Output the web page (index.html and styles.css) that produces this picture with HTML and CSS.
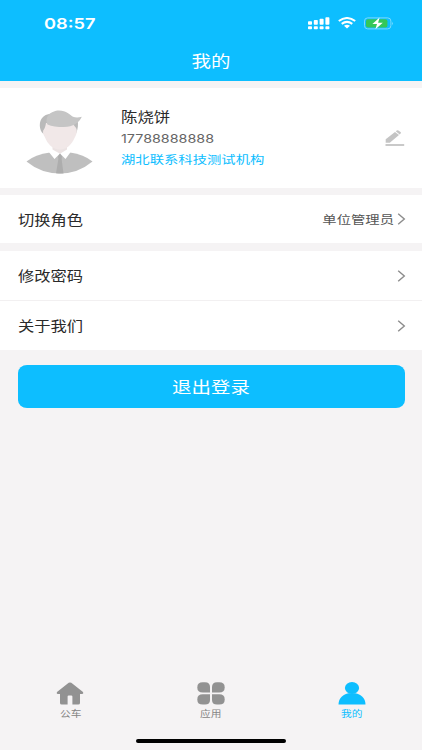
FILE: index.html
```html
<!DOCTYPE html>
<html lang="zh-CN">
  <head>
    <meta charset="UTF-8" />
    <meta name="viewport" content="width=device-width, initial-scale=1.0" />
    <title>我的</title>
    <link rel="stylesheet" href="styles.css">
  </head>
  <body>
    <header class="header">
      <div class="status-bar">
        <span class="time wide">08:57</span>
        <div class="status-icons">
          <svg class="signal" width="22" height="13" viewBox="0 0 22 13" fill="#fff">
            <rect x="0" y="4.2" width="4" height="3.6" rx="0.8" />
            <rect x="5.8" y="3.1" width="4" height="4.7" rx="0.8" />
            <rect x="11.6" y="1.7" width="4" height="6.1" rx="0.8" />
            <rect x="17.4" y="0.3" width="4" height="7.5" rx="0.8" />
            <rect x="0" y="9.2" width="4" height="3" rx="0.8" />
            <rect x="5.8" y="9.2" width="4" height="3" rx="0.8" />
            <rect x="11.6" y="9.2" width="4" height="3" rx="0.8" />
            <rect x="17.4" y="9.2" width="4" height="3" rx="0.8" />
          </svg>
          <svg class="wifi" width="18" height="12" viewBox="0 0 18 12" fill="none" stroke="#fff" stroke-width="2.1">
            <path d="M0.8 4 Q9 -1.9 17.2 4" />
            <path d="M3.7 6.8 Q9 3 14.3 6.8" />
            <path d="M6 8.8 Q9 6.8 12 8.8 L9 11.4Z" fill="#fff" stroke="none" />
          </svg>
          <svg class="battery" width="30" height="13" viewBox="0 0 30 13">
            <rect x="0.5" y="0.9" width="26.4" height="11" rx="3.2" fill="none" stroke="#7cdafc" />
            <rect x="2" y="2.2" width="21.4" height="8.4" rx="2" fill="#34c759" />
            <path d="M28.2 4.7 Q29.7 6.3 28.2 8.2Z" fill="#9ae3fd" />
            <path d="M15.6 0.6 L8.4 7.1 H13 L11.4 12.3 L18.8 5.7 H14.1Z" fill="#fff" />
          </svg>
        </div>
      </div>
      <h1 class="title"><span class="wide">我的</span></h1>
    </header>

    <main class="content">
      <section class="profile">
        <svg class="avatar" width="67" height="64" viewBox="0 0 67 64">
          <path d="M0.5 51.5 Q9 44.5 24 42.5 H44 Q58 44.5 66.5 51.5 Q52 63.5 34 63.5 Q15 63.5 0.5 51.5Z" fill="#bfbfbf" />
          <path d="M23 42.3 L26 40 H41.5 L44.5 42.3 L39.5 49 L34 43.5 L28.5 49Z" fill="#fff" />
          <path d="M26.5 34 H41 V39.5 L34 43.8 L26.5 39.5Z" fill="#ebe3e3" />
          <path d="M17 23.5 C13 20 12.5 11 17 7 C20 4 26 3 30 3 L46 9 L51.5 10 C52.5 14 52 19 50 23.5Z" fill="#bababa" />
          <path d="M20 13 L47 13 C48 17 51 17 50.8 21 C50.5 24 50 25 49 27 C46 34 41 39.5 34 39.5 C27 39.5 21.5 34 18.8 27 C17.6 25 16.5 23 17.2 20.5 C18.8 19 19.5 16 20 13Z" fill="#f1e8e8" />
          <path d="M21.5 14.5 C18 7 25 0.5 33 0.5 C40.5 0.5 44 5 47 6.7 Q50.5 8.3 55.8 6.8 C53.5 12.5 47 17 38 17 C31 17 26 16.5 21.5 14.5Z" fill="#c5c5c5" />
          <path d="M32 46.5 L34 43.6 L36 46.5 L35.6 49 L37.5 63.4 Q34 63.7 30 63.3 L32.4 49Z" fill="#adadad" />
        </svg>
        <div class="profile-info">
          <p class="name"><span class="wide">陈烧饼</span></p>
          <p class="phone"><span class="wide">17788888888</span></p>
          <p class="company"><span class="wide">湖北联系科技测试机构</span></p>
        </div>
        <svg class="edit" width="20" height="18" viewBox="0 0 20 18" fill="#c4c4c4">
          <path d="M0.7 12.8 V9.3 L10 1.9 L14 5 L4.8 12.8Z" />
          <path d="M10.8 1.3 L11.8 0.5 Q12.6 -0.1 13.4 0.5 L15.5 2.1 Q16.3 2.8 15.6 3.5 L14.7 4.4Z" />
          <rect x="0.5" y="14.1" width="18.7" height="1.8" />
        </svg>
      </section>

      <section class="list">
        <div class="list-item role">
          <span class="wide">切换角色</span>
          <span class="value wide">单位管理员</span>
          <svg class="arrow" width="9" height="12" viewBox="0 0 9 12"><path d="M1.2 0.8 L7.3 6 L1.2 11.2" /></svg>
        </div>
      </section>

      <section class="list">
        <div class="list-item">
          <span class="wide">修改密码</span>
          <svg class="arrow" width="9" height="12" viewBox="0 0 9 12"><path d="M1.2 0.8 L7.3 6 L1.2 11.2" /></svg>
        </div>
        <div class="list-item">
          <span class="wide">关于我们</span>
          <svg class="arrow" width="9" height="12" viewBox="0 0 9 12"><path d="M1.2 0.8 L7.3 6 L1.2 11.2" /></svg>
        </div>
      </section>

      <button class="logout"><span class="wide">退出登录</span></button>
    </main>

    <nav class="tab-bar">
      <a class="tab">
        <svg width="28" height="23" viewBox="0 0 28 23" fill="#929292">
          <path d="M12.7 0.8 Q14 0 15.3 0.8 L27 10 Q27.9 11.4 26.4 12 H24 V21 Q24 22.5 22.2 22.5 H16.4 V14.6 Q16.4 13.5 15.2 13.5 H12.8 Q11.6 13.5 11.6 14.6 V22.5 H5.8 Q4 22.5 4 21 V12 H1.6 Q0.1 11.4 1 10Z" />
        </svg>
        <span class="wide">公车</span>
      </a>
      <a class="tab">
        <svg width="28" height="23" viewBox="0 0 28 23" fill="#929292">
          <path d="M5.8 0.3 H8 Q13 0.3 13 5 V10.5 H5.8 Q0.3 10.5 0.3 5.4 Q0.3 0.3 5.8 0.3Z" />
          <path d="M22.2 0.3 H20 Q15 0.3 15 5 V10.5 H22.2 Q27.7 10.5 27.7 5.4 Q27.7 0.3 22.2 0.3Z" />
          <path d="M5.8 22.6 H8 Q13 22.6 13 18 V12.3 H5.8 Q0.3 12.3 0.3 17.4 Q0.3 22.6 5.8 22.6Z" />
          <path d="M22.2 22.6 H20 Q15 22.6 15 18 V12.3 H22.2 Q27.7 12.3 27.7 17.4 Q27.7 22.6 22.2 22.6Z" />
        </svg>
        <span class="wide">应用</span>
      </a>
      <a class="tab active">
        <svg width="28" height="23" viewBox="0 0 28 23" fill="#0dbeff">
          <ellipse cx="14" cy="6" rx="7.1" ry="6" />
          <path d="M0.5 22.4 C0.5 16 5.5 12 10.5 11.2 H17.5 C22.5 12 27.5 16 27.5 22.4Z" />
        </svg>
        <span class="wide">我的</span>
      </a>
    </nav>
    <div class="home-indicator"></div>
  </body>
</html>
```
FILE: styles.css
```css
* {
  margin: 0;
  padding: 0;
  box-sizing: border-box;
  font-family: "Liberation Sans", "Noto Sans CJK SC", sans-serif;
}

body {
  width: 100%;
  height: 750px;
  overflow: hidden;
  background-color: #f5f3f4;
  color: #2a2a2a;
  display: flex;
  flex-direction: column;
}

svg {
  display: block;
  flex-shrink: 0;
}

/* letters are wider than they are tall */
.wide {
  display: inline-block;
  white-space: nowrap;
  transform: scaleX(1.215);
  transform-origin: left center;
}

.header {
  height: 81px;
  background-color: #0dbeff;
  color: white;
}

.status-bar {
  display: flex;
  justify-content: space-between;
  height: 46px;
  padding: 0 28px 0 44px;
  align-items: center;
}

.time {
  font-family: Inter, sans-serif;
  font-size: 15px;
  font-weight: 600;
}

.status-icons {
  display: flex;
  align-items: center;
}

.wifi {
  margin: 0 8px 0 8px;
}

.title {
  display: flex;
  justify-content: center;
  font-size: 16px;
  font-weight: 400;
  line-height: 32px;
}

.title .wide,
.logout .wide,
.tab .wide {
  transform-origin: center;
}

.content {
  flex: 1;
}

.profile {
  display: flex;
  height: 100px;
  margin-top: 7px;
  padding: 0 17px 0 26px;
  background-color: white;
}

.avatar {
  margin-top: 21.5px;
}

.profile-info {
  flex: 1;
  margin: 19px 0 0 28px;
}

.name {
  font-size: 13.5px;
  line-height: 22px;
}

.phone {
  font-size: 11.8px;
  line-height: 21px;
  color: #666;
}

.phone .wide {
  font-family: Inter, sans-serif;
}

.company {
  font-size: 11.8px;
  line-height: 20px;
  color: #0dbeff;
}

.edit {
  margin-top: 42px;
}

.list {
  margin-top: 8px;
  background-color: white;
}

.profile + .list {
  margin-top: 7px;
}

.list-item {
  display: flex;
  align-items: center;
  height: 49px;
  padding: 0 16px 0 17.5px;
  font-size: 13.4px;
}

.list-item.role {
  height: 48px;
}

.list-item + .list-item {
  height: 50px;
  border-top: 1px solid #f2f0f1;
}

.list-item .wide {
  margin-bottom: 1px;
}

.list-item .value {
  margin-left: auto;
  margin-right: 3px;
  margin-bottom: 2px;
  font-size: 11.8px;
  color: #555;
  transform-origin: right center;
}

.arrow {
  fill: none;
  stroke: #8c8c8c;
  stroke-width: 1.4;
  margin-left: auto;
}

.value + .arrow {
  margin-left: 0;
}

.logout {
  display: block;
  width: 387px;
  height: 43px;
  margin: 15px auto 0;
  padding-bottom: 2px;
  border: none;
  border-radius: 9px / 8px;
  background-color: #0dbeff;
  color: white;
  font-size: 16px;
}

.tab-bar {
  display: flex;
  height: 57px;
}

.tab {
  flex: 1;
  display: flex;
  flex-direction: column;
  align-items: center;
  font-size: 8.8px;
  line-height: 18px;
  color: #858585;
}

.tab.active {
  color: #0dbeff;
}

.home-indicator {
  width: 150px;
  height: 4.5px;
  margin: 0 auto 7px;
  border-radius: 2px;
  background-color: black;
}
```
